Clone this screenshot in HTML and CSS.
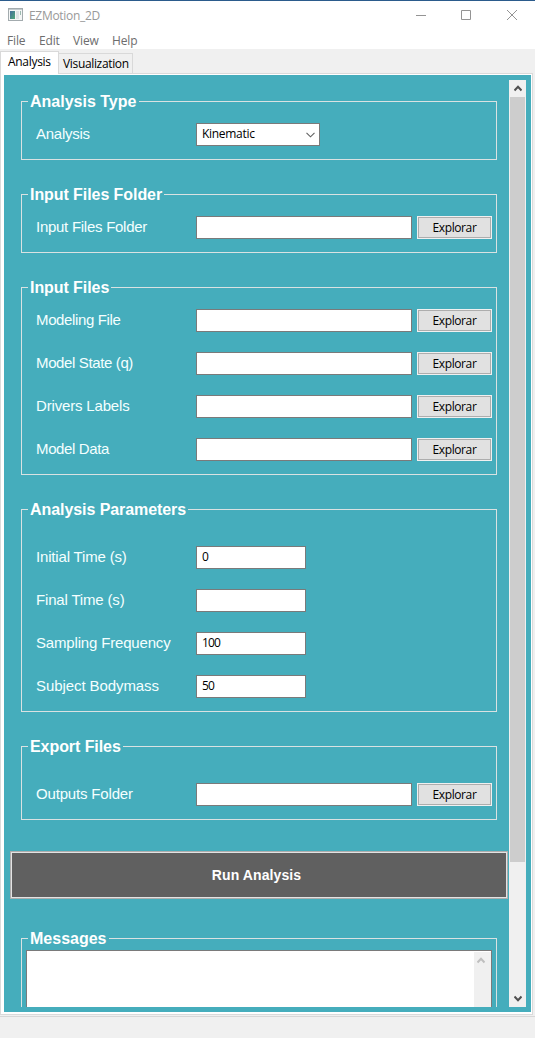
FILE: index.html
```html
<!DOCTYPE html>
<html lang="en">
<head>
<meta charset="utf-8">
<title>EZMotion_2D</title>
<link rel="stylesheet" href="styles.css">
</head>
<body>
<div class="window">
  <header class="titlebar">
    <svg class="app-icon" width="15" height="13" viewBox="0 0 15 13">
      <defs><linearGradient id="g" x1="0" y1="0" x2="1" y2="1"><stop offset="0" stop-color="#426d9c"/><stop offset="1" stop-color="#4fa878"/></linearGradient></defs>
      <rect x=".5" y=".5" width="14" height="12" fill="#f4f6f6" stroke="#a3abae"/>
      <rect x="1" y="1" width="13" height="1" fill="#c3cbce"/>
      <rect x="2" y="3" width="5" height="8" fill="url(#g)"/>
      <rect x="8" y="3" width="3" height="8" fill="#dde3e5"/>
      <rect x="12" y="3" width="1" height="4" fill="#9dbab0"/>
    </svg>
    <span class="title">EZMotion_2D</span>
    <svg class="controls" width="101" height="12" viewBox="0 0 101 12" fill="none" stroke="#949494">
      <path d="M0 7.500H10M45.500 2.500h9v9h-9zM91 2l10 10M101 2l-10 10"/>
    </svg>
  </header>
  <nav class="menu"><span class="m-file">File</span><span class="m-edit">Edit</span><span class="m-view">View</span><span class="m-help">Help</span></nav>
  <div class="tabs"><span class="tab active">Analysis</span><span class="tab second">Visualization</span></div>
  <main class="pane">
    <div class="panel">
      <div class="content">
        <section class="group g-type"><h2 class="t-type">Analysis Type</h2>
          <div class="row"><label class="tight">Analysis</label><div class="field select"><span>Kinematic</span><svg width="9" height="6" viewBox="0 0 9 6" fill="none" stroke="#606060" stroke-width="1.100"><path d="M.5 .8l4 4l4-4"/></svg></div></div>
        </section>
        <section class="group g-folder"><h2>Input Files Folder</h2>
          <div class="row"><label class="tight">Input Files Folder</label><div class="field wide"></div><button>Explorar</button></div>
        </section>
        <section class="group g-files"><h2>Input Files</h2>
          <div class="row"><label class="tighter">Modeling File</label><div class="field wide"></div><button>Explorar</button></div>
          <div class="row"><label class="tighter">Model State (q)</label><div class="field wide"></div><button>Explorar</button></div>
          <div class="row"><label>Drivers Labels</label><div class="field wide"></div><button>Explorar</button></div>
          <div class="row"><label class="tighter">Model Data</label><div class="field wide"></div><button>Explorar</button></div>
        </section>
        <section class="group g-params"><h2>Analysis Parameters</h2>
          <div class="row"><label>Initial Time (s)</label><div class="field num">0</div></div>
          <div class="row"><label>Final Time (s)</label><div class="field num"></div></div>
          <div class="row"><label>Sampling Frequency</label><div class="field num">100</div></div>
          <div class="row"><label class="loose">Subject Bodymass</label><div class="field num">50</div></div>
        </section>
        <section class="group g-export"><h2>Export Files</h2>
          <div class="row"><label>Outputs Folder</label><div class="field wide"></div><button>Explorar</button></div>
        </section>
        <div class="run">Run Analysis</div>
        <section class="group g-messages"><h2 class="t-messages">Messages</h2>
          <div class="textbox"><div class="textscroll"><svg width="8" height="7" viewBox="0 0 8 7" fill="none" stroke="#bfbfbf" stroke-width="2"><path d="M.5 5.500l3.500-3.800l3.500 3.800"/></svg></div></div>
        </section>
      </div>
      <div class="scrollbar">
        <svg width="8" height="7" viewBox="0 0 8 7" fill="none" stroke="#505050" stroke-width="2"><path d="M.5 5.500l3.500-3.800l3.500 3.800"/></svg>
        <div class="thumb"></div>
        <svg class="down" width="8" height="7" viewBox="0 0 8 7" fill="none" stroke="#505050" stroke-width="2"><path d="M.5 1.500l3.500 3.800l3.500-3.800"/></svg>
      </div>
    </div>
  </main>
  <footer class="status"></footer>
</div>
</body>
</html>
```
FILE: styles.css
```css
* { box-sizing: border-box; }
body { margin: 0; font-family: "Open Sans", "Noto Sans", sans-serif; font-size: 12px; color: #000; }
.window { width: 535px; height: 1038px; background: #f0f0f0; display: flex; flex-direction: column; overflow: hidden; }
.titlebar { height: 31px; border-top: 1px solid #2b5b8c; background: #fff; display: flex; align-items: flex-start; padding: 7px 18px 0 8px; }
.app-icon { margin-top: 0; flex: none; }
.title { margin-left: 6px; line-height: 16px; color: #999; letter-spacing: -0.3px; }
.controls { margin: 0 0 0 auto; flex: none; }
.menu { height: 18px; background: #fff; color: #6d6d6d; display: flex; padding-left: 7px; line-height: 20px; }
.menu span { white-space: nowrap; letter-spacing: -0.15px; }
.m-file { width: 32px; }
.m-edit { width: 34px; }
.m-view { width: 39px; }
.tabs { height: 24px; display: flex; align-items: flex-end; }
.tab { border: 1px solid #d9d9d9; border-bottom: 0; white-space: nowrap; height: 20px; line-height: 19px; }
.tab.active { width: 59px; height: 23px; background: #fff; padding-left: 7px; line-height: 20px; margin-bottom: -1px; z-index: 1; position: relative; letter-spacing: -0.3px; }
.tab.second { width: 74px; border-left: 0; padding-left: 4px; letter-spacing: -0.34px; }
.pane { width: 533px; height: 942px; flex: none; border: 1px solid #dadada; background: #fff; padding: 1px 1px 2px 3px; }
.panel { height: 937px; width: 527px; background: #45adbc; padding: 5px 5px 5px 6px; display: flex; justify-content: space-between; }
.content { width: 498px; height: 927px; overflow: hidden; padding-top: 21px; }
.group { position: relative; border: 1px solid #d9e2e2; width: 476px; margin: 0 0 34px 11px; padding: 21px 4px 0 14px; }
.group h2 { position: absolute; top: -10px; left: 6px; margin: 0; height: 19px; padding: 0 2px; background: #45adbc; color: #fff; font: bold 16px/19px "Liberation Sans", Arial, sans-serif; letter-spacing: -0.07px; white-space: nowrap; }
.group .t-type { letter-spacing: 0; padding-right: 3px; }
.group .t-messages { letter-spacing: 0; }
.row { height: 23px; display: flex; align-items: center; margin-bottom: 20px; }
.row label { width: 160px; font: 15px/21px "Liberation Sans", Arial, sans-serif; letter-spacing: -0.17px; color: #f4ffff; padding-bottom: 2px; height: 23px; white-space: nowrap; }
.row .loose { letter-spacing: -0.08px; }
.row .tight { letter-spacing: -0.27px; }
.row .tighter { letter-spacing: -0.37px; }
.field { height: 23px; border: 1px solid #7a7a7a; background: #fff; padding-left: 5px; line-height: 20px; }
.wide { width: 216px; }
.num { width: 110px; letter-spacing: -0.8px; }
.select { width: 124px; display: flex; justify-content: space-between; align-items: center; padding-right: 4px; letter-spacing: -0.3px; }
.select span { padding-bottom: 1px; }
button { width: 75px; height: 23px; margin: 0 0 0 5px; padding: 0; border: 1px solid #f0f0f0; box-shadow: inset 0 0 0 1px #adadad; background: #e1e1e1; font: 12px/21px "Open Sans", "Noto Sans", sans-serif; letter-spacing: -0.4px; color: #000; }
.g-type, .g-folder { height: 59px; }
.g-files { height: 188px; }
.g-params { height: 203px; padding-top: 36px; }
.g-export { height: 74px; padding-top: 36px; margin-bottom: 31px; }
.run { height: 48px; width: 498px; border: 1px solid #adadad; box-shadow: inset 0 0 0 1px #e3e3e3; background: #606060; color: #fff; font: bold 14px/46px "Liberation Sans", Arial, sans-serif; letter-spacing: 0.1px; text-align: center; padding-right: 5px; margin-bottom: 39px; }
.g-messages { height: 160px; padding: 11px 4px 4px; }
.textbox { height: 140px; background: #fff; border: 1px solid #7a7a7a; display: flex; justify-content: flex-end; padding-top: 1px; }
.textscroll { width: 17px; background: #f0f0f0; padding: 5px 0 0 3px; }
.textscroll svg { display: block; }
.scrollbar { width: 17px; height: 927px; background: #f0f0f0; display: flex; flex-direction: column; align-items: center; padding-top: 5px; }
.scrollbar svg { flex: none; }
.thumb { width: 15px; height: 765px; margin-top: 5px; background: #cdcdcd; }
.down { margin-top: 133px; }
.status { margin-top: 1px; border-top: 1px solid #d7d7d7; flex: 1; }
```
